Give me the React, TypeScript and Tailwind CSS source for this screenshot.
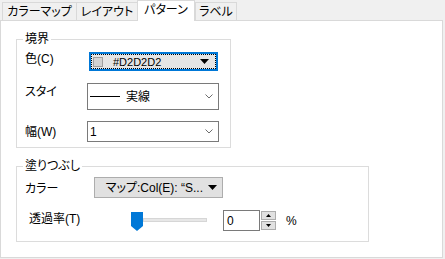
import React from 'react';

const tabs = [
  { label: 'カラーマップ', w: 'w-[75px]' },
  { label: 'レイアウト', w: 'w-[62px]' },
  { label: 'パターン', w: 'w-[58px]', active: true },
  { label: 'ラベル', w: 'w-[42px]' },
];

function Chevron() {
  return (
    <svg width="8" height="5" viewBox="0 0 8 5" className="ml-auto">
      <polyline points="0.5,0.5 4,4 7.5,0.5" fill="none" stroke="#6d6d6d" strokeWidth="1" />
    </svg>
  );
}

function SolidArrow() {
  return (
    <svg width="9" height="5" viewBox="0 0 9 5">
      <polygon points="0,0 9,0 4.5,5" fill="#000" />
    </svg>
  );
}

function SpinArrow({ up }: { up?: boolean }) {
  return (
    <svg width="5" height="3" viewBox="0 0 5 3">
      <polygon points={up ? '0,3 5,3 2.5,0' : '0,0 5,0 2.5,3'} fill="#000" />
    </svg>
  );
}

export default function App() {
  return (
    <div className="w-[445px] h-[259px] bg-[#f0f0f0] overflow-hidden text-black text-[12px] leading-[14px] font-['Liberation_Sans','Noto_Sans_CJK_JP',sans-serif] [font-feature-settings:'palt']">
      {/* Tabs */}
      <div className="h-[20px] flex items-end pl-[2px]">
        {tabs.map((t) =>
          t.active ? (
            <div
              key={t.label}
              className={`${t.w} h-[21px] -mb-px relative z-10 bg-white border border-b-0 border-[#d9d9d9] flex items-center justify-center pb-[3px]`}
            >
              {t.label}
            </div>
          ) : (
            <div
              key={t.label}
              className={`${t.w} h-[18px] -mr-px bg-[#f0f0f0] border border-b-0 border-[#d9d9d9] flex items-center justify-center`}
            >
              {t.label}
            </div>
          )
        )}
      </div>

      {/* Panel */}
      <div className="w-[443px] h-[238px] border border-[#d9d9d9] bg-white pl-[15px]">
        {/* 境界 */}
        <div className="mt-[18px] w-[215px] h-[109px] border border-[#dcdcdc]">
          <div className="-mt-[8px] ml-[6px] w-fit px-[2px] bg-white">境界</div>

          <div className="mt-[6px] pl-[8px] flex items-start">
            <div className="w-[64px] pt-0">色(C)</div>
            <div className="w-[129px] h-[19px] border-2 border-[#0078d7] bg-[#e5e5e5]">
              <div className="h-full border border-dotted border-black flex items-center pl-[1px] pr-[6px]">
                <div className="w-[10px] h-[10px] border border-[#a0a0a0] bg-[#d2d2d2]" />
                <span className="ml-[10px] text-[11px]">#D2D2D2</span>
                <div className="ml-auto">
                  <SolidArrow />
                </div>
              </div>
            </div>
          </div>

          <div className="mt-[12px] pl-[8px] flex items-start">
            <div className="w-[62px] pt-[2px]">スタイ</div>
            <div className="w-[132px] h-[27px] border border-[#7a7a7a] bg-white flex items-center pl-[2px] pr-[5px]">
              <div className="w-[30px] h-px bg-black" />
              <span className="ml-[6px]">実線</span>
              <Chevron />
            </div>
          </div>

          <div className="mt-[11px] pl-[8px] flex items-start">
            <div className="w-[62px] pt-[4px]">幅(W)</div>
            <div className="w-[132px] h-[21px] border border-[#7a7a7a] bg-white flex items-center pl-[2px] pr-[5px]">
              <span>1</span>
              <Chevron />
            </div>
          </div>
        </div>

        {/* 塗りつぶし */}
        <div className="mt-[18px] w-[353px] h-[76px] border border-[#dcdcdc]">
          <div className="-mt-[8px] ml-[6px] w-fit px-[2px] bg-white">塗りつぶし</div>

          <div className="mt-[4px] pl-[8px] flex items-start">
            <div className="w-[69px] pt-[5px]">カラー</div>
            <div className="w-[129px] h-[21px] border border-[#adadad] bg-[#e1e1e1] flex items-center justify-end pr-[5px]">
              <span>マップ:Col(E): “S...</span>
              <div className="ml-[5px]">
                <SolidArrow />
              </div>
            </div>
          </div>

          <div className="mt-[12px] pl-[12px] flex items-start">
            <div className="w-[102px] pt-[2px]">透過率(T)</div>
            <div className="flex items-start w-[76px]">
              <svg width="12" height="19" viewBox="0 0 12 19" className="mt-[2px]">
                <polygon points="0,0 12,0 12,14 6,19 0,14" fill="#0078d7" />
              </svg>
              <div className="mt-[8px] w-[64px] h-[4px] bg-[#e7e7e7] border border-[#d6d6d6]" />
            </div>
            <div className="ml-[16px] flex">
              <div className="w-[37px] h-[21px] border border-[#7a7a7a] bg-white pl-[3px] flex items-center">0</div>
              <div className="w-[17px] h-[21px] flex flex-col gap-px p-px">
                <div className="flex-1 bg-[#e1e1e1] border border-[#adadad] flex items-center justify-center">
                  <SpinArrow up />
                </div>
                <div className="flex-1 bg-[#e1e1e1] border border-[#adadad] flex items-center justify-center">
                  <SpinArrow />
                </div>
              </div>
            </div>
            <div className="ml-[9px] pt-[4px]">%</div>
          </div>
        </div>
      </div>
    </div>
  );
}
